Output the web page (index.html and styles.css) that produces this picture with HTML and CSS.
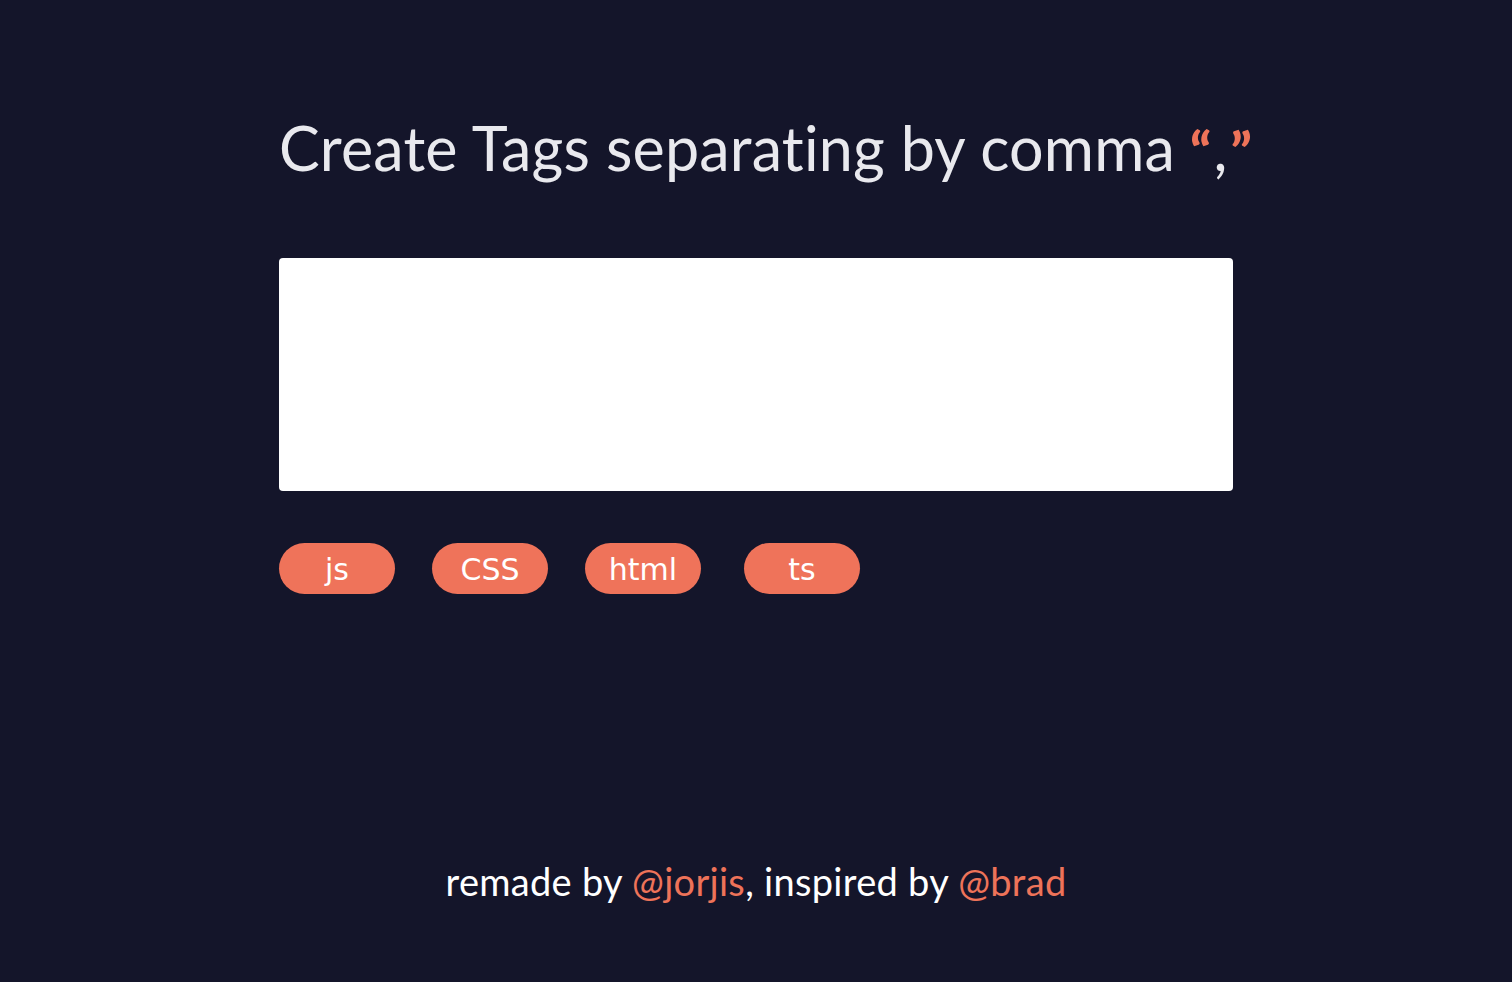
FILE: index.html
```html
<!DOCTYPE html>
<html lang="en">
<head>
<meta charset="utf-8">
<title>Tags</title>
<link rel="stylesheet" href="styles.css">
</head>
<body>
<main class="page">
  <section class="box">
    <h1 class="title">Create Tags separating by comma <span class="q q--open">“</span><span class="comma">,</span><span class="q q--close">”</span></h1>
    <textarea class="input"></textarea>
    <div class="tags">
      <span class="tag">js</span>
      <span class="tag">CSS</span>
      <span class="tag">html</span>
      <span class="tag tag--last">ts</span>
    </div>
  </section>
  <footer class="credit">remade by <a class="link">@jorjis</a>, inspired by <a class="link">@brad</a></footer>
</main>
</body>
</html>
```
FILE: styles.css
```css
html, body {
  margin: 0;
  padding: 0;
  background: #14152a;
}
body {
  font-family: "Lato", "Noto Sans", sans-serif;
  height: 982px;
  overflow: hidden;
}
.page {
  display: flex;
  flex-direction: column;
  align-items: center;
}
.box {
  width: 954px;
  padding-top: 109px;
}
.title {
  margin: 0;
  white-space: nowrap;
  font-weight: 400;
  font-size: 61px;
  line-height: 78px;
  height: 78px;
  color: #e9e9ee;
  letter-spacing: 0.2px;
}
.q {
  color: #ee7359;
  font-weight: 900;
  font-size: 54px;
  line-height: 1;
}
.q--open {
  margin-left: -1px;
}
.comma {
  margin: 0 3px 0 2px;
}
.input {
  display: block;
  box-sizing: border-box;
  width: 954px;
  height: 233px;
  margin-top: 71px;
  border: none;
  border-radius: 4px;
  background: #ffffff;
  resize: none;
  padding: 10px;
}
.tags {
  display: flex;
  gap: 37px;
  margin-top: 52px;
}
.tag {
  width: 116px;
  height: 51px;
  border-radius: 26px;
  background: #ef735a;
  color: #ffffff;
  font-family: "DejaVu Sans", sans-serif;
  font-size: 30px;
  display: flex;
  align-items: center;
  justify-content: center;
  box-sizing: border-box;
  padding-top: 2px;
}
.tag--last {
  margin-left: 6px;
}
.credit {
  margin-top: 264px;
  font-size: 38px;
  color: #ffffff;
  letter-spacing: 0.3px;
}
.link {
  color: #ee7359;
}
```
